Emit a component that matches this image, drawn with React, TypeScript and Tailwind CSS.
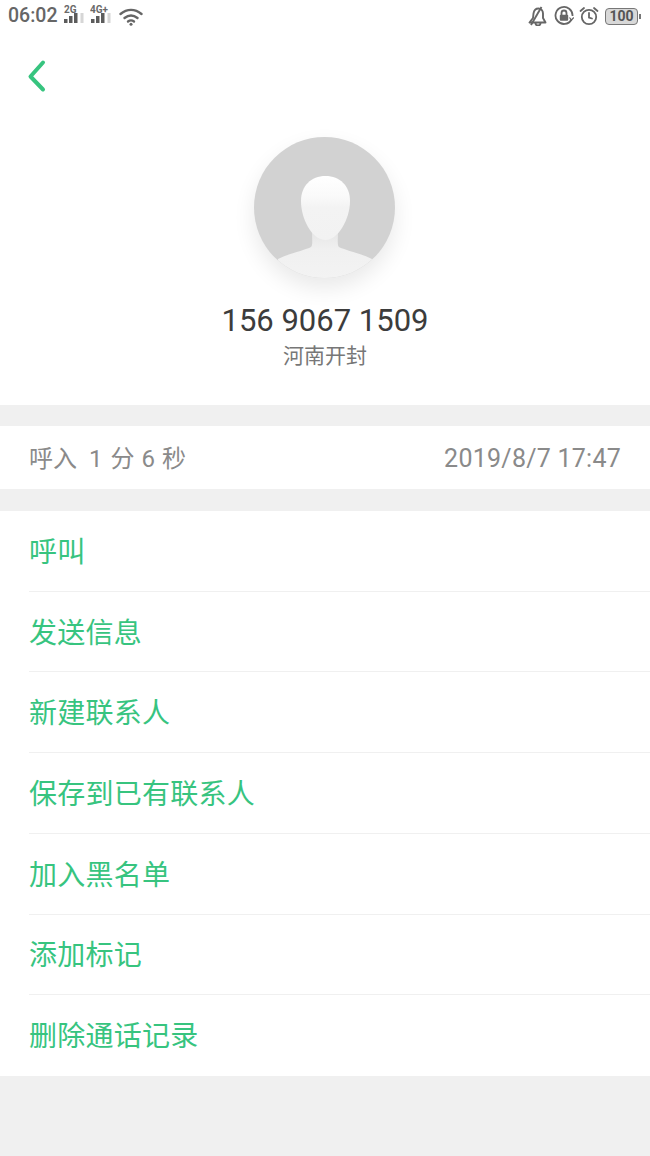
const cn = { fontFamily: '"Roboto", "Noto Sans CJK SC", sans-serif' };

function Signal({ label, textX }: { label: string; textX: number }) {
  return (
    <svg width="24" height="24" viewBox="0 0 24 24" className="block">
      <text x={textX} y="9" fontSize="10" fontWeight="700" fill="#6a6a6a" fontFamily="Roboto, sans-serif">{label}</text>
      <rect x="1" y="15" width="3.5" height="4" fill="#5c5c5c" />
      <rect x="6" y="12" width="3.5" height="7" fill="#5c5c5c" />
      <rect x="11" y="9" width="3.5" height="10" fill="#5c5c5c" />
      <rect x="17.5" y="9" width="3" height="10" fill="#d6d6d6" />
    </svg>
  );
}

function StatusBar() {
  return (
    <div className="flex h-[32px] items-center justify-between pl-[8px] pr-[9px]">
      <div className="flex items-center">
        <span className="text-[19.5px] font-medium leading-none text-[#666666]">06:02</span>
        <div className="ml-[6px]"><Signal label="2G" textX={1} /></div>
        <div className="ml-[3px]"><Signal label="4G+" textX={0} /></div>
        <svg className="ml-[5px] mt-[1px]" width="24" height="18" viewBox="0 0 24 18" fill="none" stroke="#666" strokeWidth="2.4" strokeLinecap="round">
          <path d="M1.5 6C8 .5 16 .5 22.5 6" />
          <path d="M5.5 10C9.5 6.8 14.5 6.8 18.5 10" />
          <path d="M9 13.5C11 12 13 12 15 13.5" />
          <circle cx="12" cy="16.3" r="1.5" fill="#666" stroke="none" />
        </svg>
      </div>
      <div className="flex items-center">
        <svg width="20" height="20" viewBox="0 0 20 20" fill="none" stroke="#666" strokeWidth="1.9" strokeLinejoin="round">
          <path d="M1.5 16.5h16L15 12V7.5C15 4.5 13 2.5 10.5 2.5 8 2.5 6 4.5 5.5 7.5L5 12z" />
          <path d="M7.5 17a2.5 2.5 0 0 0 5 0" />
          <path d="M3 19L13.5 1" />
        </svg>
        <svg className="ml-[6px]" width="20" height="20" viewBox="0 0 20 20" fill="none" stroke="#666" strokeWidth="1.8">
          <path d="M17.5 13.5A8.5 8.5 0 1 1 18.5 10" />
          <path d="M15.5 11.5L17.5 14L19.8 11.5" strokeWidth="1.2" />
          <rect x="5.8" y="8.8" width="8.4" height="6" rx="1" fill="#666" stroke="none" />
          <path d="M7.5 9V7a2.5 2.5 0 0 1 5 0v2" />
        </svg>
        <svg className="ml-[5px]" width="20" height="20" viewBox="0 0 20 20" fill="none" stroke="#666" strokeWidth="1.8" strokeLinecap="round">
          <circle cx="10" cy="11" r="7.2" />
          <path d="M10 7v4.5l3 1" />
          <path d="M1.5 5L5 2M18.5 5L15 2" />
        </svg>
        <div className="relative ml-[6px] mr-[3px] flex h-[17px] w-[33px] items-center justify-center rounded-[4px] border border-[#777] bg-[#d8d8d8]">
          <span className="text-[14px] font-bold leading-none text-[#555]">100</span>
          <span className="absolute right-[-4px] top-[5px] h-[5px] w-[2px] bg-[#777]" />
        </div>
      </div>
    </div>
  );
}

function Avatar() {
  return (
    <div className="h-[141px] w-[141px] overflow-hidden rounded-full bg-[#d2d2d2] shadow-[0_10px_22px_rgba(0,0,0,0.09)]">
      <svg width="141" height="141" viewBox="0 0 141 141">
        <defs>
          <linearGradient id="face" x1="0" y1="0" x2="0" y2="1">
            <stop offset="0" stopColor="#ffffff" />
            <stop offset="0.3" stopColor="#fafafa" />
            <stop offset="0.5" stopColor="#f3f3f3" />
            <stop offset="1" stopColor="#f2f2f2" />
          </linearGradient>
          <linearGradient id="neck" x1="0" y1="0" x2="0" y2="1">
            <stop offset="0" stopColor="#e4e4e4" />
            <stop offset="0.4" stopColor="#f0f0f0" />
            <stop offset="1" stopColor="#f3f3f3" />
          </linearGradient>
        </defs>
        <path d="M24 122C36 116 52 113 57 110C59 108 58 103 58 92H84C84 103 83 108 85 110C90 113 106 116 118 122L118 141H24Z" fill="url(#neck)" />
        <path d="M71.5 39C86 39 96 49 96 64C96 82 84 103 71.5 103C58 103 47 82 47 64C47 49 57 39 71.5 39Z" fill="url(#face)" />
      </svg>
    </div>
  );
}

const actions = ["呼叫", "发送信息", "新建联系人", "保存到已有联系人", "加入黑名单", "添加标记", "删除通话记录"];

export default function App() {
  return (
    <div className="flex h-[1156px] w-[650px] flex-col overflow-hidden bg-[#f0f0f0]" style={cn}>
      <div className="h-[405px] bg-white">
        <StatusBar />
        <div className="flex h-[88px] items-center pl-[26px]">
          <svg width="22" height="34" viewBox="0 0 22 34" fill="none" stroke="#37c47f" strokeWidth="4" strokeLinecap="round" strokeLinejoin="round">
            <path d="M17 3.5L4.5 17.5L17 30.5" />
          </svg>
        </div>
        <div className="mt-[17px] flex flex-col items-center">
          <div className="-translate-x-[1px]"><Avatar /></div>
          <div className="mt-[23px] text-[31px] leading-[40px] text-[#3c3c3c]">156 9067 1509</div>
          <div className="text-[21px] leading-[30px] text-[#777777]">河南开封</div>
        </div>
      </div>
      <div className="mt-[21px] flex h-[63px] items-center justify-between bg-white px-[29px] pt-[3px] text-[24px] text-[#8a8a8a]">
        <span className="flex">
          <span>呼入</span>
          <span className="ml-[12px]">1</span>
          <span className="ml-[8px]">分</span>
          <span className="ml-[7px]">6</span>
          <span className="ml-[7px]">秒</span>
        </span>
        <span className="text-[25px] tracking-[0.25px]">2019/8/7 17:47</span>
      </div>
      <div className="mt-[22px] flex h-[565px] flex-col bg-white pl-[29px]">
        {actions.map((a, i) => (
          <div key={a} className={`flex flex-1 items-center border-b pt-[4px] text-[28px] tracking-[0.25px] text-[#37c47f] ${i < 6 ? "border-[#f0f0f0]" : "border-transparent"}`}>
            {a}
          </div>
        ))}
      </div>
    </div>
  );
}
